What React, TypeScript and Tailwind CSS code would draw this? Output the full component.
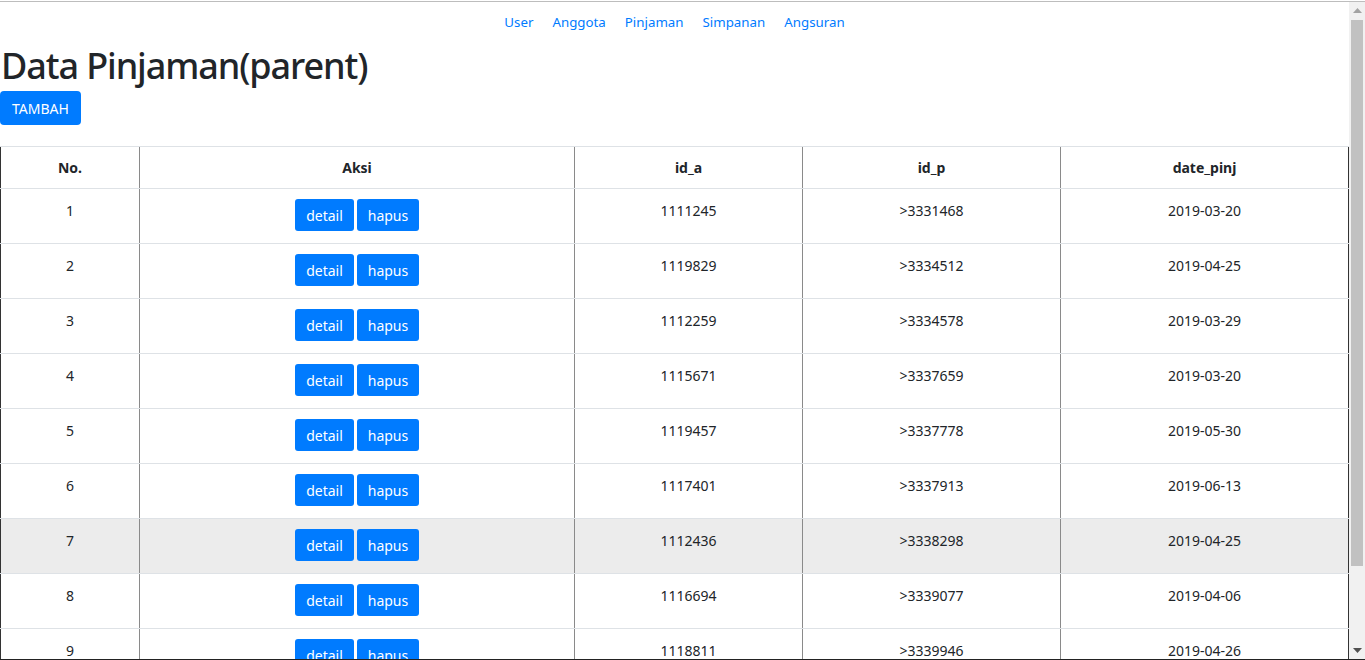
import React from "react";

const rows = [
  ["1", "1111245", ">3331468", "2019-03-20"],
  ["2", "1119829", ">3334512", "2019-04-25"],
  ["3", "1112259", ">3334578", "2019-03-29"],
  ["4", "1115671", ">3337659", "2019-03-20"],
  ["5", "1119457", ">3337778", "2019-05-30"],
  ["6", "1117401", ">3337913", "2019-06-13"],
  ["7", "1112436", ">3338298", "2019-04-25"],
  ["8", "1116694", ">3339077", "2019-04-06"],
  ["9", "1118811", ">3339946", "2019-04-26"],
];

const grid = "grid grid-cols-[139px_435px_228px_258px_289px]";

export default function App() {
  return (
    <div
      className="w-[1365px] h-[660px] overflow-hidden flex flex-col bg-white text-[#212529]"
      style={{ fontFamily: '"Noto Sans", "Open Sans", sans-serif' }}
    >
      <div className="h-px bg-white" />
      <div className="h-px bg-[#bdbdbd]" />
      <div className="flex flex-1 min-h-0">
        <main className="flex-1 min-w-0 overflow-hidden">
          <nav className="flex justify-center gap-[19px] pt-[10px] h-[41px] text-[13.3px] leading-[21px] text-[#007bff]">
            <span>User</span>
            <span>Anggota</span>
            <span>Pinjaman</span>
            <span>Simpanan</span>
            <span>Angsuran</span>
          </nav>
          <h1 className="text-[36px] leading-[46px] font-medium pl-[1px] tracking-[-1.1px] mb-[2px]">
            Data Pinjaman(parent)
          </h1>
          <button className="w-[81px] h-[34px] bg-[#007bff] text-white text-[14px] rounded-[4px] flex items-center justify-center">
            TAMBAH
          </button>
          <div className="mt-[21px] w-[1349px] text-[14px]">
            <div className={`${grid} h-[42px] border-t border-[#dee2e6] font-bold`}>
              <div className="border-l border-l-[#333] flex items-center justify-center">No.</div>
              <div className="border-l border-l-[#8a8a8a] flex items-center justify-center">Aksi</div>
              <div className="border-l border-l-[#8a8a8a] flex items-center justify-center">id_a</div>
              <div className="border-l border-l-[#8a8a8a] flex items-center justify-center">id_p</div>
              <div className="border-l border-l-[#8a8a8a] border-r border-r-[#333] flex items-center justify-center">date_pinj</div>
            </div>
            {rows.map((r) => (
              <div
                key={r[0]}
                className={`${grid} h-[55px] border-t border-[#dee2e6] ${r[0] === "7" ? "bg-[#ececec]" : ""}`}
              >
                <div className="border-l border-l-[#333] text-center pt-[11px] leading-[21px]">{r[0]}</div>
                <div className="border-l border-l-[#8a8a8a] flex justify-center gap-[3px] pt-[10px]">
                  <button className="w-[59px] h-[32px] bg-[#007bff] text-white text-[14px] rounded-[3px]">detail</button>
                  <button className="w-[62px] h-[32px] bg-[#007bff] text-white text-[14px] rounded-[3px]">hapus</button>
                </div>
                <div className="border-l border-l-[#8a8a8a] text-center pt-[11px] leading-[21px]">{r[1]}</div>
                <div className="border-l border-l-[#8a8a8a] text-center pt-[11px] leading-[21px]">{r[2]}</div>
                <div className="border-l border-l-[#8a8a8a] border-r border-r-[#333] text-center pt-[11px] leading-[21px]">{r[3]}</div>
              </div>
            ))}
          </div>
        </main>
        <div className="w-[16px] bg-[#f1f1f1] flex flex-col items-center">
          <div className="h-[17px] flex items-center justify-center">
            <svg width="9" height="5" viewBox="0 0 9 5">
              <polygon points="0,5 9,5 4.5,0" fill="#a3a3a3" />
            </svg>
          </div>
          <div className="w-[12px] h-[546px] bg-[#c1c1c1] mt-[1px]" />
          <div className="flex-1" />
          <div className="h-[17px] flex items-center justify-center">
            <svg width="9" height="5" viewBox="0 0 9 5">
              <polygon points="0,0 9,0 4.5,5" fill="#505050" />
            </svg>
          </div>
        </div>
      </div>
      <div className="h-px bg-[#222]" />
    </div>
  );
}
